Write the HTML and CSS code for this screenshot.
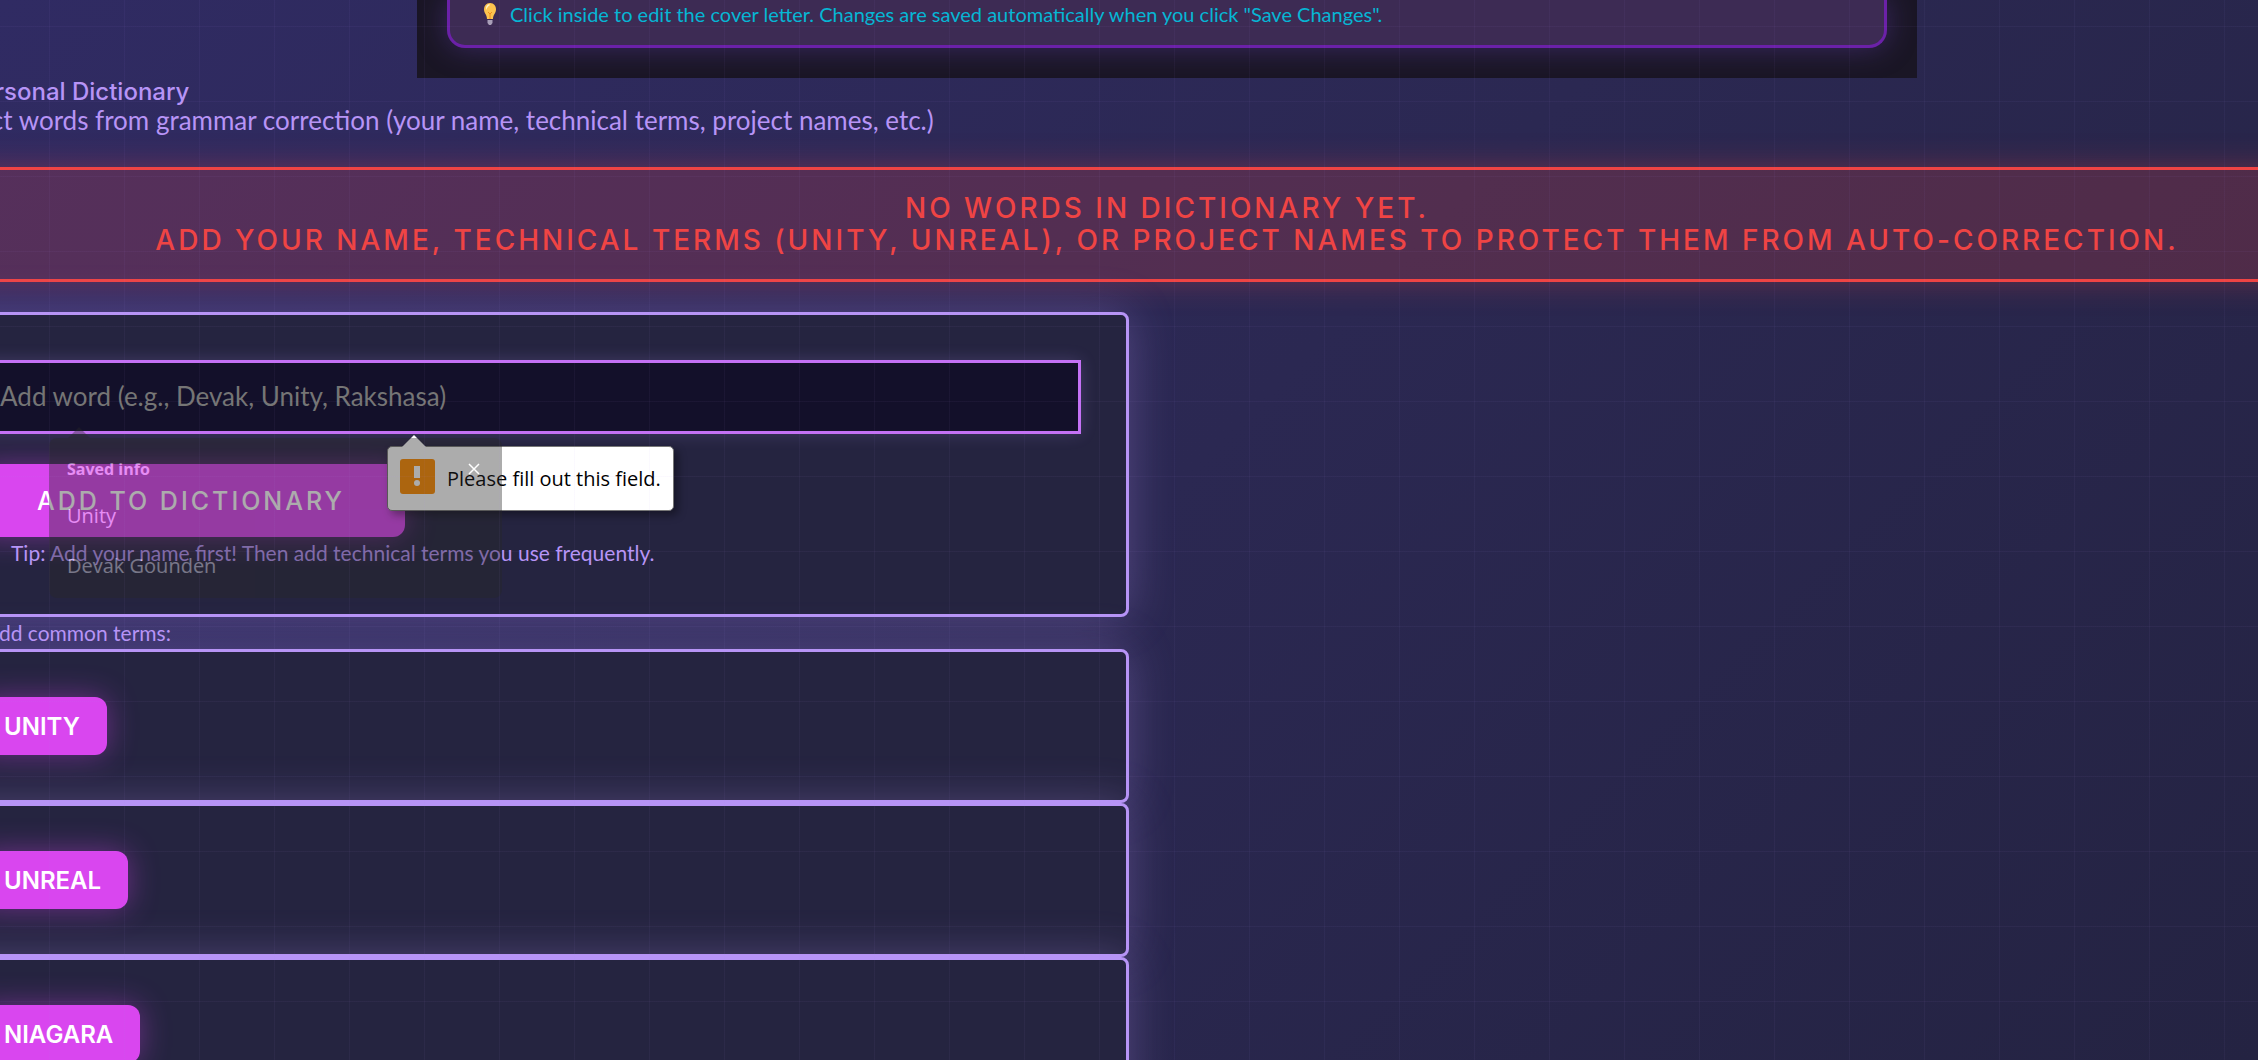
FILE: index.html
```html
<!DOCTYPE html>
<html lang="en">
<head>
    <meta charset="UTF-8">
    <meta name="viewport" content="width=device-width, initial-scale=1.0">
    <title>Personal Dictionary</title>
    <link rel="stylesheet" href="styles.css">
</head>
<body>
    <main class="page">
        <section class="editor">
            <div class="editor-card">
                <p class="editor-hint">
                    <svg class="bulb" viewBox="0 0 16 24" aria-hidden="true">
                        <path d="M8 1C4 1 2 4 2 7.500c0 4 3 5 3 9.500h6c0-4.500 3-5.500 3-9.500C14 4 12 1 8 1z" fill="#fdc44f"/>
                        <path d="M7 2C4.500 3 3.500 5 4 8c1-2 2-4 4-5z" fill="#fff3c4"/>
                        <path d="M6 10l2 2 2-2M8 12v5" fill="none" stroke="#f08c1c"/>
                        <path d="M5.500 18h5v3l-1.500 2H7l-1.500-2z" fill="#a99fb8"/>
                    </svg>
                    Click inside to edit the cover letter. Changes are saved automatically when you click "Save Changes".
                </p>
            </div>
        </section>

        <h2 class="title"><span class="title-icon">📖</span> Personal Dictionary</h2>
        <p class="subtitle">Protect words from grammar correction (your name, technical terms, project names, etc.)</p>

        <div class="notice">
            No words in dictionary yet.<br>
            Add your name, technical terms (Unity, Unreal), or project names to protect them from auto-correction.
        </div>

        <form class="card" onsubmit="return false">
            <div class="field">
                <input class="word-input" type="text" aria-label="Add word" placeholder="Add word (e.g., Devak, Unity, Rakshasa)">

                <!-- Validation bubble -->
                <div class="bubble" role="alert">
                    <svg class="bubble-icon" viewBox="0 0 35 35" aria-hidden="true">
                        <rect width="35" height="35" rx="3" fill="#ff8c00"/>
                        <rect x="14" y="7" width="6" height="12" fill="#fff"/>
                        <circle cx="17" cy="24" r="3" fill="#fff"/>
                    </svg>
                    <span>Please fill out this field.</span>
                </div>

                <!-- Autofill list, fading out -->
                <div class="autofill">
                    <div class="autofill-head">
                        <span>Saved info</span>
                        <button class="autofill-close" type="button" aria-label="Close">
                            <svg viewBox="0 0 12 12" aria-hidden="true"><path d="M1 1l10 10M11 1L1 11" stroke="#fff" stroke-width="1.500"/></svg>
                        </button>
                    </div>
                    <button class="autofill-item" type="button">Unity</button>
                    <button class="autofill-item" type="button">Devak Gounden</button>
                </div>
            </div>
            <button class="btn btn-wide" type="submit">Add to Dictionary</button>
            <p class="tip"><span class="tip-icon">💡</span>Tip: Add your name first! Then add technical terms you use frequently.</p>
        </form>

        <p class="label">Quick add common terms:</p>

        <div class="card"><button class="btn" type="button">Unity</button></div>
        <div class="card"><button class="btn" type="button">Unreal</button></div>
        <div class="card"><button class="btn" type="button">Niagara</button></div>
    </main>
</body>
</html>
```
FILE: styles.css
```css
* {
    box-sizing: border-box;
    margin: 0;
    padding: 0;
}
html {
    height: 100%;
    overflow: hidden;
}
body {
    height: 100%;
    overflow: hidden;
    background: linear-gradient(135deg, #302b63 0%, #2b2852 50%, #242342 100%);
    color: #b794f6;
    font-family: Lato, sans-serif;
}
/* grid over the whole page */
body::after {
    content: "";
    position: fixed;
    inset: 0;
    pointer-events: none;
    background-image:
        linear-gradient(rgba(183, 148, 246, 0.05) 1px, transparent 1px),
        linear-gradient(90deg, rgba(183, 148, 246, 0.05) 1px, transparent 1px);
    background-size: 75px 75px;
    background-position: 49px 26px;
}
/* content is wider than the window */
.page {
    margin: 0 -147px 0 -71px;
}

.editor {
    max-width: 1500px;
    margin: 0 auto;
    padding: 0 30px 30px;
    background: #1a1625;
    overflow: hidden;
}
.editor-card {
    padding: 0 30px 17px;
    border: 3px solid #6b21a8;
    border-top: none;
    border-radius: 0 0 18px 18px;
    background: #3d2b54;
    box-shadow: 0 0 30px rgba(107, 70, 193, 0.4);
}
.editor-hint {
    display: flex;
    align-items: center;
    gap: 10px;
    color: #06b6d4;
    font-size: 20px;
    line-height: 28px;
}
.bulb {
    width: 20px;
    height: 24px;
}

.title {
    font-family: Inter, sans-serif;
    font-size: 24px;
    font-weight: 500;
    line-height: 28px;
}
.title-icon {
    font-size: 24px;
}
.subtitle {
    font-size: 26px;
    line-height: 28px;
    margin-bottom: 33px;
}

.notice {
    margin-bottom: 30px;
    padding: 22px 0 23px;
    border: 3px solid #ef4444;
    background: rgba(239, 68, 68, 0.2);
    box-shadow: 0 0 30px rgba(239, 68, 68, 0.3);
    color: #ef4444;
    font-family: Inter, sans-serif;
    font-size: 28px;
    font-weight: 500;
    line-height: 32px;
    letter-spacing: 3px;
    text-align: center;
    text-transform: uppercase;
}

.card {
    max-width: 1200px;
    padding: 45px;
    border: 3px solid #b794f6;
    border-radius: 8px;
    background: #252440;
    box-shadow: 0 0 45px rgba(183, 148, 246, 0.3);
}
.field {
    position: relative;
    margin-bottom: 30px;
}
.word-input {
    display: block;
    width: 100%;
    height: 74px;
    padding: 0 20px 2px;
    border: 3px solid #c471f5;
    background: #13102a;
    box-shadow: 0 0 15px rgba(183, 148, 246, 0.2);
    color: #fff;
    font-family: Lato, sans-serif;
    font-size: 26px;
}
.word-input::placeholder {
    color: #757575;
}

.btn {
    display: block;
    height: 58px;
    padding: 0 27px;
    border: none;
    border-radius: 12px;
    background: #d946ef;
    box-shadow: 0 0 30px rgba(217, 70, 239, 0.4);
    color: #fff;
    font-family: Inter, sans-serif;
    font-size: 24px;
    font-weight: 600;
    text-transform: uppercase;
}
.btn-wide {
    height: 73px;
    padding: 0 60px;
    font-weight: 500;
    font-size: 25px;
    letter-spacing: 3px;
}
.tip {
    font-size: 21px;
    line-height: 32px;
    height: 32px;
}
.tip-icon {
    display: inline-block;
    width: 34px;
}
.label {
    font-size: 21px;
    line-height: 32px;
}

.bubble {
    position: absolute;
    top: 86px;
    left: 410px;
    display: flex;
    align-items: center;
    gap: 12px;
    height: 65px;
    padding: 0 12px;
    border: 1px solid #777;
    border-radius: 5px;
    background: #fff;
    box-shadow: 4px 4px 8px rgba(0, 0, 0, 0.4);
    color: #000;
    font-family: "Open Sans", sans-serif;
    font-size: 20px;
    white-space: nowrap;
}
.bubble::before {
    content: "";
    position: absolute;
    top: -12px;
    left: 14px;
    border: 12px solid transparent;
    border-top: none;
    border-bottom-color: #fff;
}
.bubble-icon {
    width: 35px;
    height: 35px;
    margin-bottom: 4px;
}

.autofill {
    position: absolute;
    top: 78px;
    left: 72px;
    width: 453px;
    padding: 16px 18px 8px;
    border-radius: 8px;
    background: #282828;
    color: #fff;
    font-family: "Open Sans", sans-serif;
    opacity: 0.38;
}
.autofill::before {
    content: "";
    position: absolute;
    top: -11px;
    left: 19px;
    border: 11px solid transparent;
    border-top: none;
    border-bottom-color: #282828;
}
.autofill-head {
    display: flex;
    justify-content: space-between;
    align-items: center;
    margin-bottom: 6px;
    padding-right: 4px;
    font-size: 16px;
    font-weight: 700;
    line-height: 30px;
}
.autofill-close {
    width: 12px;
    height: 12px;
    border: none;
    background: none;
}
.autofill-close svg {
    display: block;
    width: 12px;
    height: 12px;
}
.autofill-item {
    display: block;
    width: 100%;
    height: 50px;
    border: none;
    background: none;
    color: #fff;
    font-family: "Open Sans", sans-serif;
    font-size: 20px;
    text-align: left;
}
```
